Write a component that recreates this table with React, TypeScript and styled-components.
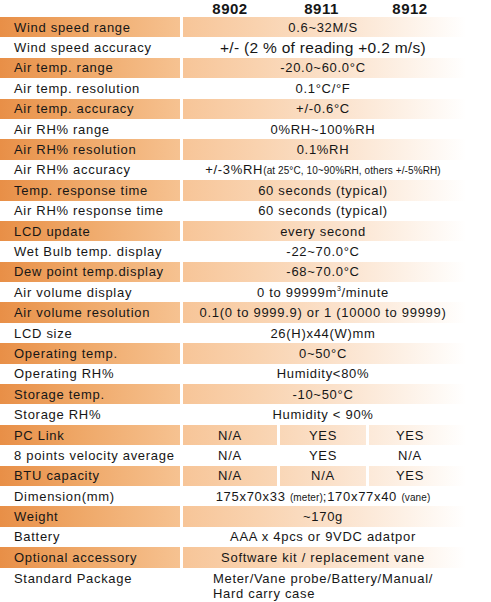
import React from "react";
import styled, { createGlobalStyle, css } from "styled-components";

const Global = createGlobalStyle`
  html, body { margin: 0; padding: 0; background: #ffffff; }
  body { font-family: "Liberation Sans", Arial, sans-serif; color: #161616; }
`;

const Sheet = styled.div`
  width: 491px;
  display: flex;
  flex-direction: column;
`;

const HeaderRow = styled.div`
  height: 17px;
  display: grid;
  grid-template-columns: 183px 94px 89px 1fr;
  align-items: center;
  font-weight: bold;
  font-size: 15px;
  letter-spacing: 0.5px;
`;

const HeadCell = styled.div<{ $pr?: number }>`
  text-align: center;
  padding-right: ${(p) => p.$pr ?? 0}px;
  padding-left: ${(p) => (p.$pr ? 3 : 0)}px;
`;

const Row = styled.div<{ $tall?: boolean }>`
  height: ${(p) => (p.$tall ? "34px" : "20.4px")};
  display: grid;
  grid-template-columns: 180px 1fr;
  column-gap: 3px;
  font-size: 13px;
  letter-spacing: 0.7px;
`;

const Label = styled.div<{ $shade: boolean; $tall?: boolean }>`
  display: flex;
  align-items: ${(p) => (p.$tall ? "flex-start" : "center")};
  padding-left: 14px;
  padding-top: ${(p) => (p.$tall ? "3px" : "0")};
  white-space: nowrap;
  ${(p) =>
    p.$shade &&
    css`
      background: linear-gradient(to right, #e88f47 0%, #efa868 45%, #f6c291 100%);
    `}
`;

const shadeBg = css`
  background: linear-gradient(
    to right,
    #f7c598 0%,
    #f9d3b0 25%,
    #fbe2cc 50%,
    #fdf1e6 72%,
    #ffffff 92%
  );
`;

const Value = styled.div<{ $shade: boolean; $tall?: boolean }>`
  display: flex;
  align-items: ${(p) => (p.$tall ? "flex-start" : "center")};
  justify-content: center;
  padding-right: 28px;
  padding-top: ${(p) => (p.$tall ? "3px" : "0")};
  white-space: nowrap;
  ${(p) => p.$shade && shadeBg}
`;

const Triple = styled.div<{ $shade: boolean }>`
  display: grid;
  grid-template-columns: 94px 89px 1fr;
  ${(p) => p.$shade && shadeBg}
`;

const TriCell = styled.div<{ $first?: boolean; $last?: boolean }>`
  display: flex;
  align-items: center;
  justify-content: center;
  border-left: ${(p) => (p.$first ? "none" : "3px solid #ffffff")};
  padding-right: ${(p) => (p.$last ? "40px" : "0")};
`;

const Big = styled.span`
  font-size: 15.5px;
  letter-spacing: 0.3px;
`;

const Small = styled.span`
  font-size: 10px;
  letter-spacing: 0.1px;
`;

const Sup = styled.sup`
  font-size: 7px;
  vertical-align: 6px;
  line-height: 0;
`;

const Block = styled.div`
  text-align: left;
  line-height: 15px;
`;

type Spec = {
  label: string;
  value?: React.ReactNode;
  cells?: [string, string, string];
  tall?: boolean;
};

const specs: Spec[] = [
  { label: "Wind speed range", value: "0.6~32M/S" },
  { label: "Wind speed accuracy", value: <Big>+/- (2 % of reading +0.2 m/s)</Big> },
  { label: "Air temp. range", value: "-20.0~60.0°C" },
  { label: "Air temp. resolution", value: "0.1°C/°F" },
  { label: "Air temp. accuracy", value: "+/-0.6°C" },
  { label: "Air RH% range", value: "0%RH~100%RH" },
  { label: "Air RH% resolution", value: "0.1%RH" },
  {
    label: "Air RH% accuracy",
    value: (
      <span>
        +/-3%RH<Small>(at 25°C, 10~90%RH, others +/-5%RH)</Small>
      </span>
    ),
  },
  { label: "Temp. response time", value: "60 seconds (typical)" },
  { label: "Air RH% response time", value: "60 seconds (typical)" },
  { label: "LCD update", value: "every second" },
  { label: "Wet Bulb temp. display", value: "-22~70.0°C" },
  { label: "Dew point temp.display", value: "-68~70.0°C" },
  {
    label: "Air volume display",
    value: (
      <span>
        0 to 99999m<Sup>3</Sup>/minute
      </span>
    ),
  },
  { label: "Air volume resolution", value: "0.1(0 to 9999.9) or 1 (10000 to 99999)" },
  { label: "LCD size", value: "26(H)x44(W)mm" },
  { label: "Operating temp.", value: "0~50°C" },
  { label: "Operating RH%", value: "Humidity<80%" },
  { label: "Storage temp.", value: "-10~50°C" },
  { label: "Storage RH%", value: "Humidity < 90%" },
  { label: "PC Link", cells: ["N/A", "YES", "YES"] },
  { label: "8 points velocity average", cells: ["N/A", "YES", "N/A"] },
  { label: "BTU capacity", cells: ["N/A", "N/A", "YES"] },
  {
    label: "Dimension(mm)",
    value: (
      <span>
        175x70x33 <Small>(meter)</Small>;170x77x40 <Small>(vane)</Small>
      </span>
    ),
  },
  { label: "Weight", value: "~170g" },
  { label: "Battery", value: "AAA x 4pcs or 9VDC adatpor" },
  { label: "Optional accessory", value: "Software kit / replacement vane" },
  {
    label: "Standard Package",
    tall: true,
    value: (
      <Block>
        Meter/Vane probe/Battery/Manual/
        <br />
        Hard carry case
      </Block>
    ),
  },
];

export default function App() {
  return (
    <>
      <Global />
      <Sheet>
        <HeaderRow>
          <div />
          <HeadCell>8902</HeadCell>
          <HeadCell $pr={0}>8911</HeadCell>
          <HeadCell $pr={40}>8912</HeadCell>
        </HeaderRow>
        {specs.map((s, i) => {
          const shade = i % 2 === 0;
          return (
            <Row key={s.label} $tall={s.tall}>
              <Label $shade={shade} $tall={s.tall}>
                {s.label}
              </Label>
              {s.cells ? (
                <Triple $shade={shade}>
                  <TriCell $first>{s.cells[0]}</TriCell>
                  <TriCell>{s.cells[1]}</TriCell>
                  <TriCell $last>{s.cells[2]}</TriCell>
                </Triple>
              ) : (
                <Value $shade={shade} $tall={s.tall}>
                  {s.value}
                </Value>
              )}
            </Row>
          );
        })}
      </Sheet>
    </>
  );
}
